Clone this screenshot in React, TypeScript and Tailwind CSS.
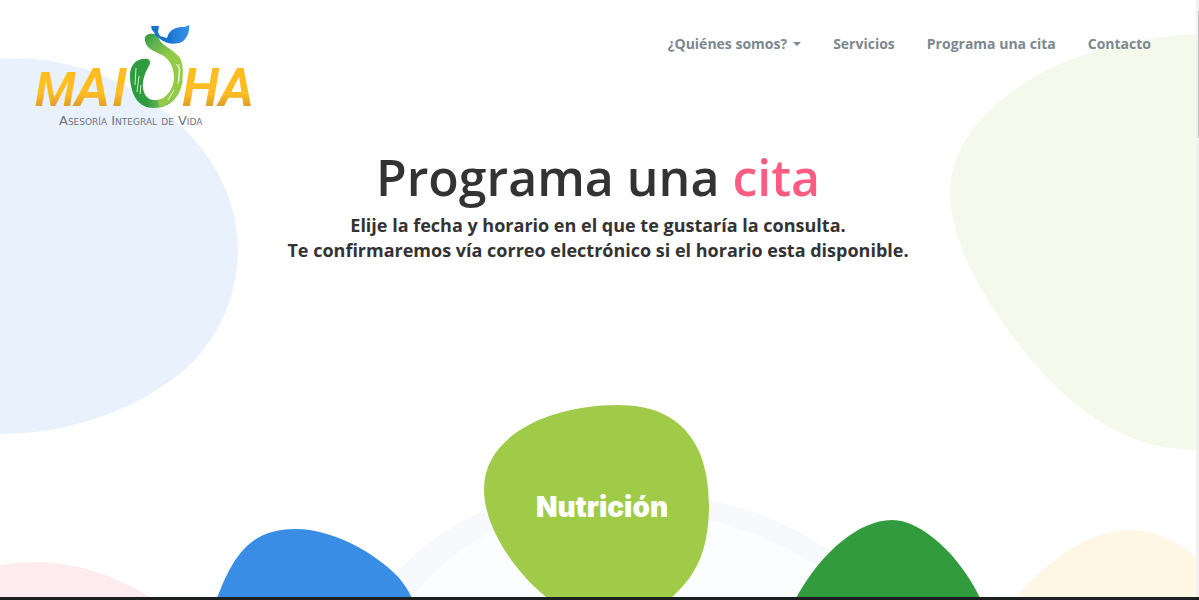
import React from "react";

function Logo() {
  return (
    <a href="#inicio" aria-label="Maioha" className="block shrink-0">
      <svg viewBox="0 0 232 108" className="block h-[108px] w-[232px]">
        <defs>
          <linearGradient id="gold" gradientUnits="userSpaceOnUse" x1="0" y1="30" x2="0" y2="92">
            <stop offset="0.7" stopColor="#ffbd22" />
            <stop offset="1" stopColor="#cf8f2c" />
          </linearGradient>
          <linearGradient id="leaf" gradientUnits="userSpaceOnUse" x1="116" y1="0" x2="154" y2="0">
            <stop offset="0.5" stopColor="#1872d0" />
            <stop offset="0.55" stopColor="#2079d6" />
            <stop offset="0.75" stopColor="#2b84dd" />
            <stop offset="1" stopColor="#3b8fe3" />
          </linearGradient>
          <linearGradient id="pear" gradientUnits="userSpaceOnUse" x1="109" y1="14" x2="142" y2="48">
            <stop offset="0.1" stopColor="#36a043" />
            <stop offset="0.25" stopColor="#58ae52" />
            <stop offset="0.5" stopColor="#79bd4a" />
            <stop offset="0.7" stopColor="#94cb46" />
          </linearGradient>
          <linearGradient id="bowl" gradientUnits="userSpaceOnUse" x1="95" y1="0" x2="148" y2="0">
            <stop offset="0.3" stopColor="#2f9b3e" />
            <stop offset="0.5" stopColor="#58ae52" />
            <stop offset="0.8" stopColor="#79bd4a" />
            <stop offset="1" stopColor="#94cb46" />
          </linearGradient>
        </defs>
        <text
          fill="url(#gold)"
          className="font-['Roboto',sans-serif] text-[54px] font-semibold italic"
        >
          <tspan x="0" y="86" className="text-[48px]">M</tspan>
          <tspan x="40" y="86">A</tspan>
          <tspan x="77" y="86">I</tspan>
          <tspan x="147" y="86">H</tspan>
          <tspan x="184" y="86">A</tspan>
        </text>
        <path
          fill="url(#bowl)"
          d="M95 58C94 47 100 39 109 39C113 38 116 40 115 44C111 51 107 59 108 68C109 76 114 81 122 80C134 80 142 68 148 58C146 76 136 88 119 88C103 88 96 75 95 58Z"
        />
        <path
          fill="url(#pear)"
          d="M110 20C109 15 114 13 119 14C123 15 124 20 127 23C132 28 140 31 145 38C150 48 148 64 142 74C138 81 132 86 124 87L123 80C132 78 138 69 139 59C139 50 137 43 130 37C124 32 111 31 110 20Z"
        />
        <path
          fill="url(#leaf)"
          d="M116 6H124L123 12L125 16L132 18C134 9 142 7 148 7C152 7 153 5 154 5C155 12 152 18 147 22C140 25 131 24 125 19L120 15L119 12L117 10Z"
        />
        <path
          fill="none"
          stroke="#fff"
          strokeWidth="1"
          strokeOpacity="0.8"
          d="M101 48L100 65M104 56L102 72M106 65L105 74M141 44L145 49L143 64M144 44L144 61M139 70L133 80"
        />
        <text
          x="24"
          y="105"
          fill="#6b747c"
          className="font-['DejaVu_Sans',sans-serif] text-[13px] font-normal [font-variant-caps:small-caps]"
        >
          Asesoría Integral de Vida
        </text>
      </svg>
    </a>
  );
}

const links = ["Servicios", "Programa una cita", "Contacto"];

function Header() {
  return (
    <header className="relative flex items-start justify-between pt-5 pr-[45px] pl-[35px]">
      <Logo />
      <nav className="flex items-center gap-8 pt-3 text-sm leading-6 font-bold text-[#7c8890]">
        <button type="button" className="flex items-center gap-[6px]">
          ¿Quiénes somos?
          <svg viewBox="0 0 8 4" className="h-1 w-2" fill="currentColor" aria-hidden="true">
            <path d="M0 0H8L4 4Z" />
          </svg>
        </button>
        {links.map((label) => (
          <a key={label} href="#">
            {label}
          </a>
        ))}
      </nav>
    </header>
  );
}

function Background() {
  return (
    <div aria-hidden="true" className="pointer-events-none absolute inset-0 overflow-hidden">
      <svg viewBox="0 0 240 600" className="absolute top-0 left-0 h-[600px] w-[240px]">
        <path
          fill="#e9f2fc"
          d="M0 59C60 54 125 77 171 117C216 155 238 203 238 249C238 296 218 341 181 373C132 412 66 434 0 434Z"
        />
        <path fill="#fdecef" d="M0 565C50 557 96 565 150 597V600H0Z" />
      </svg>
      <svg viewBox="0 0 250 600" className="absolute top-0 right-0 h-[600px] w-[250px]">
        <path
          fill="#f5f9eb"
          d="M250 34C177 38 107 58 58 98C24 125 4 158 4 193C4 241 38 299 70 341C119 404 175 450 250 450Z"
        />
        <path fill="#fff6e6" d="M70 597C108 553 149 530 184 530C206 530 231 540 250 557V600H67Z" />
      </svg>
      <svg
        viewBox="0 0 600 200"
        className="absolute top-[490px] left-1/2 h-[200px] w-[600px] -translate-x-1/2"
      >
        <path
          fill="#f7f9fd"
          d="M75 110C103 72 142 39 190 19C270 0 350 0 420 12C470 24 515 45 560 80V200H75Z"
        />
        <path
          fill="#fcfdff"
          d="M108 115C133 82 162 56 200 39C270 20 350 17 420 32C470 46 510 66 545 94V200H108Z"
        />
      </svg>
    </div>
  );
}

function Services() {
  return (
    <section className="relative flex items-start justify-center pt-[142px]">
      <a href="#" aria-label="Servicio azul" className="mt-[123px] mr-[71px] shrink-0">
        <svg viewBox="0 0 196 80" className="h-20 w-[196px]">
          <path
            fill="#398de5"
            d="M0 70C16 28 33 1 78 1C122 1 166 32 182 50C188 57 194 66 199 80H-3Z"
          />
        </svg>
      </a>
      <a href="#" className="relative block shrink-0">
        <svg viewBox="0 0 225 225" className="h-[225px] w-[225px]">
          <path
            fill="#9fcb48"
            d="M0 84C0 30 66 0 134 0C200 0 225 43 225 100C225 153 207 175 186 194C162 216 93 216 61 191C32 168 0 123 0 84Z"
          />
        </svg>
        <span className="absolute inset-x-0 top-[84px] pl-3 text-center font-['Inter',sans-serif] text-[28px] leading-9 font-black text-white">
          Nutrición
        </span>
      </a>
      <a href="#" aria-label="Servicio verde" className="mt-[115px] ml-[87px] shrink-0">
        <svg viewBox="0 0 184 90" className="h-[90px] w-[184px]">
          <path
            fill="#319b3e"
            d="M0 78C24 34 62 0 96 0C126 0 164 36 184 78L188 90H-6Z"
          />
        </svg>
      </a>
    </section>
  );
}

export default function App() {
  return (
    <div className="flex h-screen flex-col overflow-hidden bg-white font-['Open_Sans',sans-serif] text-[#333333]">
      <div className="flex min-h-0 flex-1">
        <main className="relative min-w-0 flex-1 overflow-hidden">
          <Background />
          <Header />
          <section className="relative pt-[19px] text-center">
            <h1 className="text-[50px] leading-[60px] font-semibold">
              Programa una <span className="text-[#fc5c82]">cita</span>
            </h1>
            <p className="pt-[6px] text-lg leading-[25px] font-bold">
              Elije la fecha y horario en el que te gustaría la consulta.
              <br />
              Te confirmaremos vía correo electrónico si el horario esta disponible.
            </p>
          </section>
          <Services />
        </main>
        <div aria-hidden="true" className="flex w-[3px] justify-end bg-[#f1f1f1] pt-[11px]">
          <div className="h-[127px] w-px bg-[#c1c1c1]" />
        </div>
      </div>
      <div className="h-[3px] shrink-0 bg-[#1c1f20]" />
    </div>
  );
}
